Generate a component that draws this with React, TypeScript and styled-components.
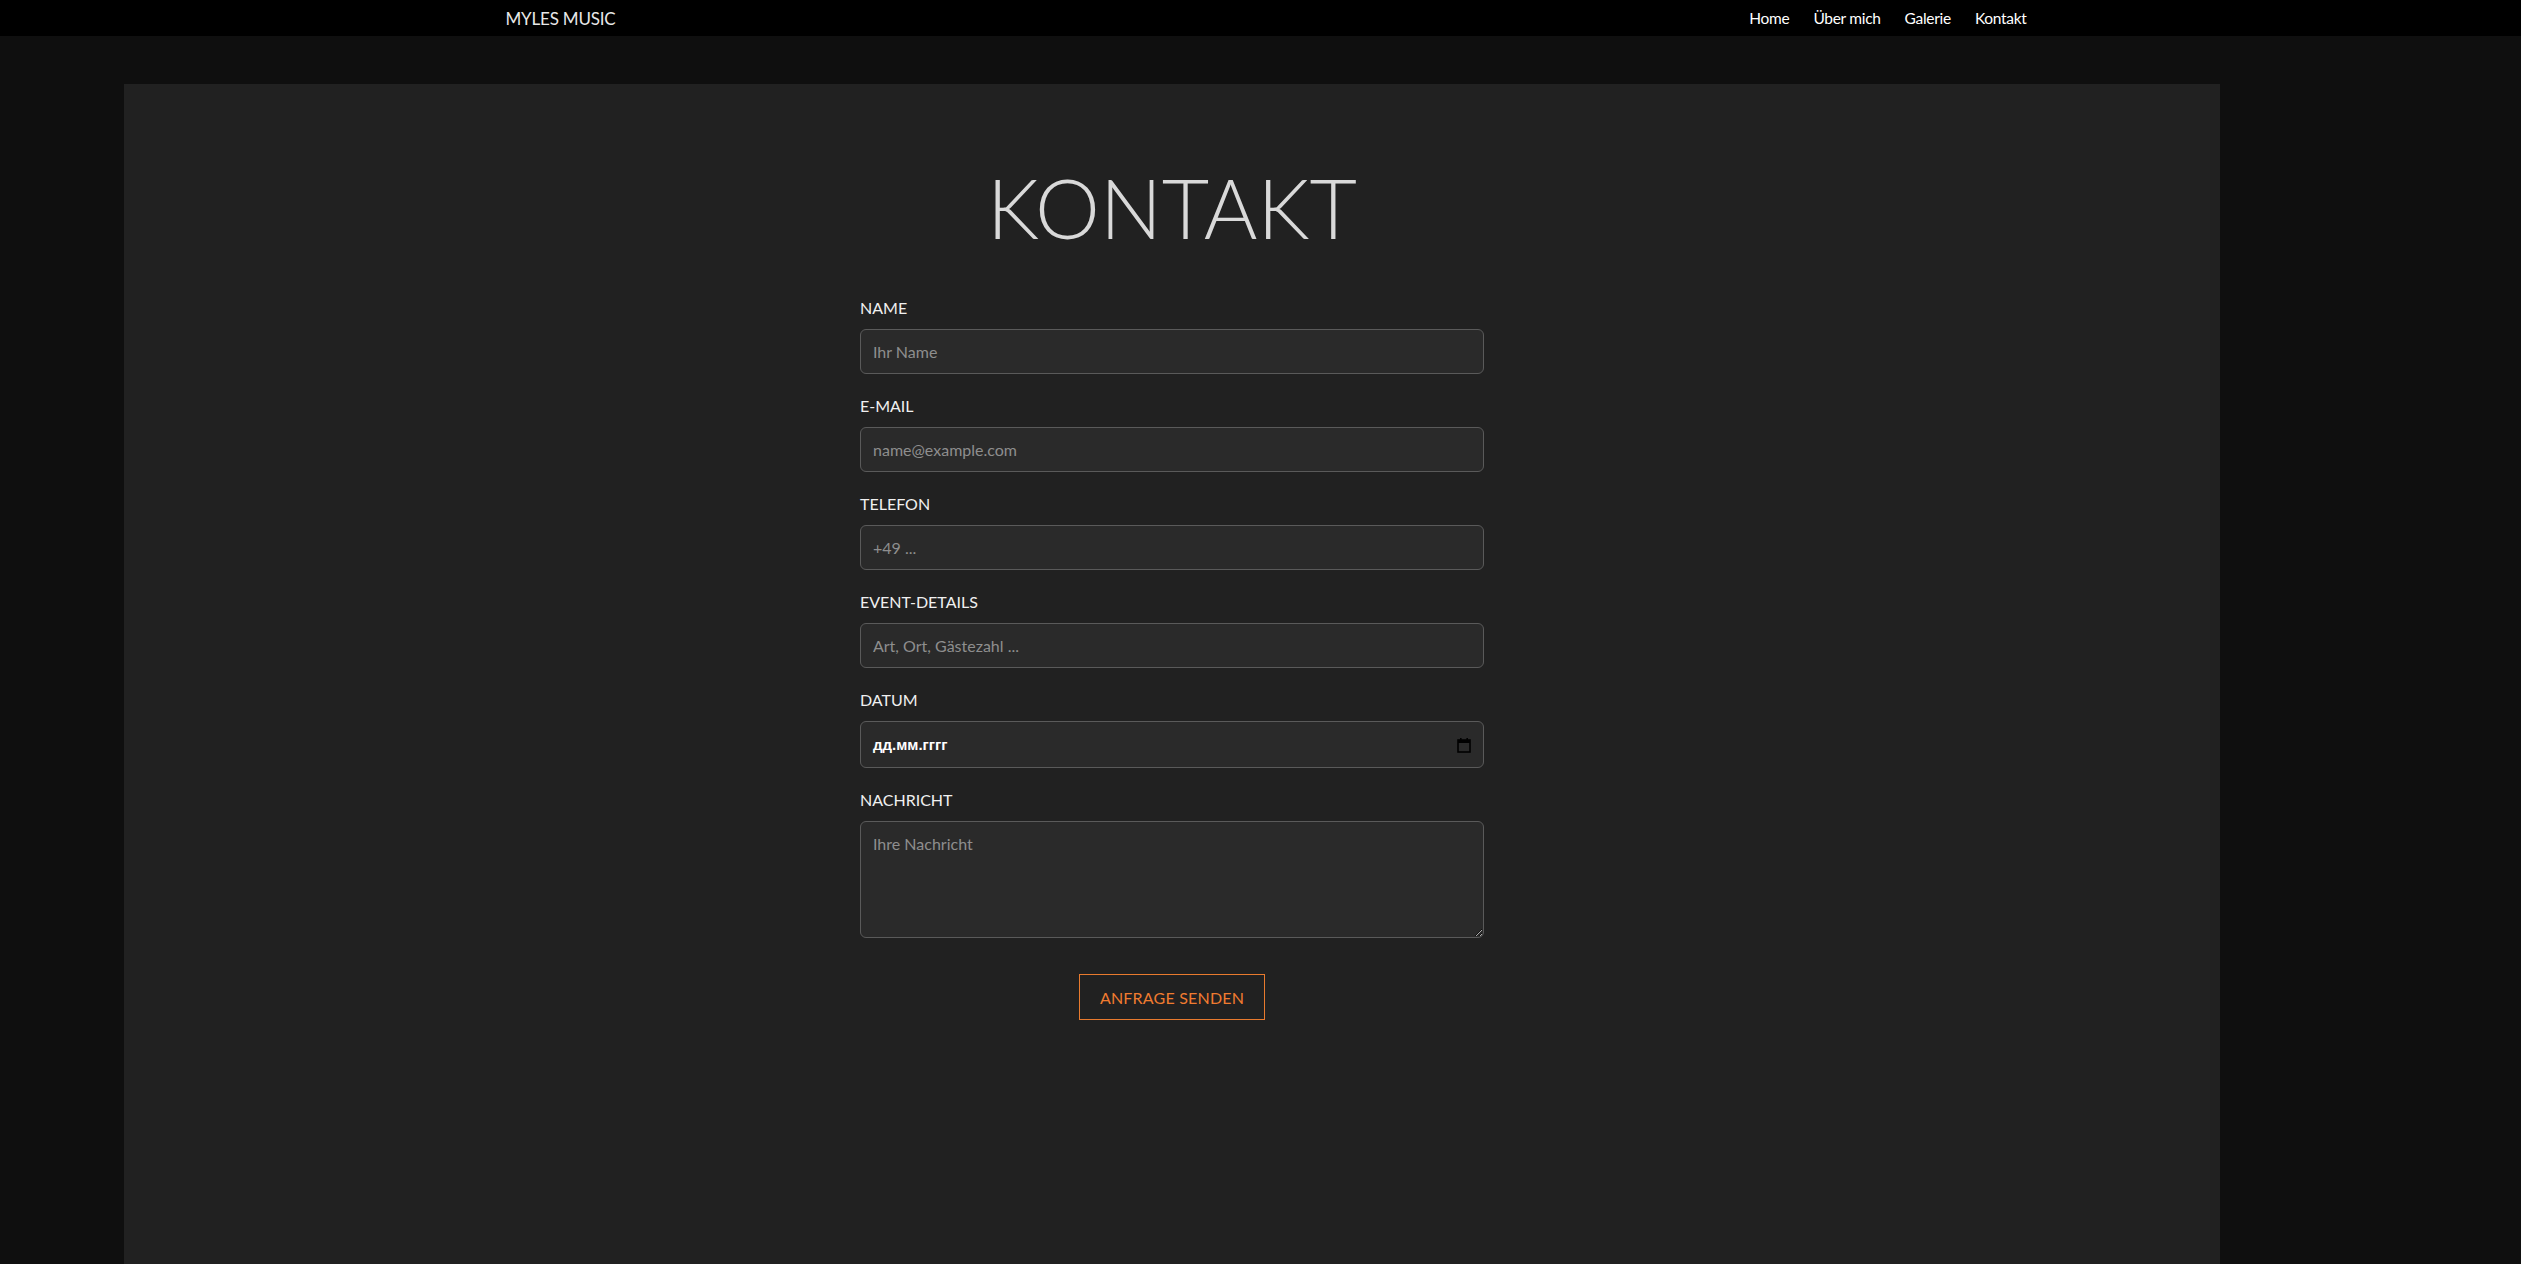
import styled, { createGlobalStyle } from "styled-components";

const GlobalStyle = createGlobalStyle`
  * {
    box-sizing: border-box;
  }
  body {
    margin: 0;
    background-color: #0f0f0f;
    font-family: Lato, "Open Sans", sans-serif;
    color: #ececec;
  }
`;

const NavBar = styled.header`
  height: 36px;
  background-color: #000;
`;

const NavInner = styled.div`
  width: 1532px;
  height: 100%;
  margin: 0 auto;
  padding-left: 11px;
  display: flex;
  justify-content: space-between;
  align-items: center;
`;

const Brand = styled.a`
  font-size: 17px;
  color: #e8e8e8;
  text-decoration: none;
  letter-spacing: -0.2px;
`;

const NavLinks = styled.nav`
  display: flex;
  gap: 24px;
`;

const NavLink = styled.a`
  font-size: 15.5px;
  color: #fff;
  text-decoration: none;
  letter-spacing: -0.3px;
`;

const Panel = styled.main`
  width: 2096px;
  min-height: calc(100vh - 84px);
  margin: 48px 0 0 124px;
  padding: 74px 0 80px;
  background-color: #212121;
  display: flex;
  flex-direction: column;
  align-items: center;
`;

const Title = styled.h1`
  margin: 0 0 42px;
  font-size: 82px;
  line-height: 1.2;
  font-weight: 300;
  color: #d9d9d9;
`;

const Form = styled.form`
  width: 624px;
  display: flex;
  flex-direction: column;
`;

const Field = styled.div`
  display: flex;
  flex-direction: column;
  margin-bottom: 22px;
`;

const Label = styled.label`
  font-size: 16px;
  line-height: 20px;
  color: #f0f0f0;
  margin-bottom: 11px;
`;

const fieldBox = `
  width: 100%;
  background-color: #2a2a2a;
  border: 1px solid #5a5a5a;
  border-radius: 6px;
  font-family: Lato, "Open Sans", sans-serif;
  font-size: 16px;
  color: #e6e6e6;
  outline: none;
`;

const Input = styled.input`
  ${fieldBox}
  height: 45px;
  padding: 0 12px;
  &::placeholder {
    color: #8e8e8e;
  }
`;

const DateBox = styled.div`
  ${fieldBox}
  height: 47px;
  padding: 0 12px;
  display: flex;
  align-items: center;
  justify-content: space-between;
`;

const DateText = styled.span`
  font-family: "Liberation Sans", Arial, sans-serif;
  font-size: 15px;
  font-weight: 700;
  color: #fff;
`;

const TextArea = styled.textarea`
  ${fieldBox}
  height: 117px;
  padding: 12px;
  resize: vertical;
  &::placeholder {
    color: #8e8e8e;
  }
`;

const SubmitButton = styled.button`
  align-self: center;
  margin-top: 14px;
  height: 46px;
  padding: 0 20px;
  background: transparent;
  border: 1px solid #e87a2e;
  font-family: Lato, "Open Sans", sans-serif;
  font-size: 16px;
  color: #f07b30;
  letter-spacing: 0.2px;
`;

const CalendarIcon = () => (
  <svg width="14" height="16" viewBox="0 0 14 16">
    <rect x="1" y="3" width="12" height="12" fill="none" stroke="#000" strokeWidth="1.6" />
    <rect x="1" y="3" width="12" height="3" fill="#000" />
    <rect x="3" y="1" width="1.6" height="3" fill="#000" />
    <rect x="9.4" y="1" width="1.6" height="3" fill="#000" />
  </svg>
);

const fields = [
  { id: "name", label: "NAME", placeholder: "Ihr Name", type: "text" },
  { id: "email", label: "E-MAIL", placeholder: "name@example.com", type: "email" },
  { id: "phone", label: "TELEFON", placeholder: "+49 ...", type: "tel" },
  { id: "event", label: "EVENT-DETAILS", placeholder: "Art, Ort, Gästezahl ...", type: "text" },
];

const App = () => {
  return (
    <>
      <GlobalStyle />
      <NavBar>
        <NavInner>
          <Brand href="#">MYLES MUSIC</Brand>
          <NavLinks>
            <NavLink href="#">Home</NavLink>
            <NavLink href="#">Über mich</NavLink>
            <NavLink href="#">Galerie</NavLink>
            <NavLink href="#">Kontakt</NavLink>
          </NavLinks>
        </NavInner>
      </NavBar>
      <Panel>
        <Title>KONTAKT</Title>
        <Form onSubmit={e => e.preventDefault()}>
          {fields.map(f => (
            <Field key={f.id}>
              <Label htmlFor={f.id}>{f.label}</Label>
              <Input id={f.id} type={f.type} placeholder={f.placeholder} />
            </Field>
          ))}
          <Field>
            <Label htmlFor="date">DATUM</Label>
            <DateBox id="date">
              <DateText>дд.мм.гггг</DateText>
              <CalendarIcon />
            </DateBox>
          </Field>
          <Field>
            <Label htmlFor="message">NACHRICHT</Label>
            <TextArea id="message" placeholder="Ihre Nachricht" />
          </Field>
          <SubmitButton type="submit">ANFRAGE SENDEN</SubmitButton>
        </Form>
      </Panel>
    </>
  );
};

export default App;
